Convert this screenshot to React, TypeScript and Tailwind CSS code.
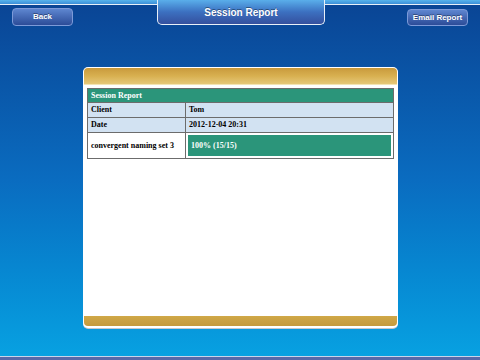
export default function App() {
  return (
    <div className="relative w-[480px] h-[360px] overflow-hidden bg-gradient-to-b from-[#0a4494] via-[#0a6cc0] to-[#08a2e2] font-['Liberation_Sans',sans-serif]">
      {/* top strip */}
      <div className="absolute left-0 top-0 w-[480px] h-[5px] bg-gradient-to-b from-[#58b4ec] to-[#3c8ed8] border-b border-[#e8f0f8]" />
      {/* title tab */}
      <div className="absolute left-[157px] top-0 w-[168px] h-[25px] rounded-b-[5px] border-x border-b border-[#e8f0f8] bg-gradient-to-b from-[#5aaeea] via-[#3c70c0] to-[#34509e] flex items-center justify-center">
        <span className="text-white font-bold text-[10px] [text-shadow:0_-1px_0_rgba(0,0,0,0.4)]">Session Report</span>
      </div>

      {/* header buttons */}
      <div className="flex justify-between px-[12px] pt-[8px]">
        <button className="w-[61px] h-[18px] rounded-[4px] border border-[#7c9ad8] bg-gradient-to-b from-[#5e86d0] to-[#2c4c98] text-white text-[8px] font-bold [text-shadow:0_-1px_0_rgba(0,0,0,0.4)]">
          Back
        </button>
        <button className="w-[61px] h-[17px] mt-[1px] rounded-[4px] border border-[#7c9ad8] bg-gradient-to-b from-[#5e86d0] to-[#2c4c98] text-white text-[8px] font-bold [text-shadow:0_-1px_0_rgba(0,0,0,0.4)]">
          Email Report
        </button>
      </div>

      {/* report panel */}
      <div className="absolute left-[83px] top-[67px] w-[315px] h-[261px] rounded-[5px] bg-white shadow-[0_1px_0_#c8c8c8] flex flex-col overflow-hidden">
        <div className="h-[17px] mx-[1px] mt-[1px] rounded-t-[4px] bg-gradient-to-b from-[#c99a3c] via-[#d8b050] to-[#e6c878] border-b border-[#f4e4b4]" />
        <div className="flex-1 px-[4px] pt-[3px] font-['Liberation_Serif',serif] text-[8px] font-bold text-black">
          <div className="border border-[#6c6c6c]">
            <div className="h-[14px] bg-[#2b957a] text-white flex items-center px-[3px] border-b border-[#6c6c6c]">
              Session Report
            </div>
            <div className="grid grid-cols-[98px_1fr] h-[15px] bg-[#d2e2f2] border-b border-[#6c6c6c]">
              <div className="flex items-center px-[3px] border-r border-[#6c6c6c]">Client</div>
              <div className="flex items-center px-[3px]">Tom</div>
            </div>
            <div className="grid grid-cols-[98px_1fr] h-[15px] bg-[#d2e2f2] border-b border-[#6c6c6c]">
              <div className="flex items-center px-[3px] border-r border-[#6c6c6c]">Date</div>
              <div className="flex items-center px-[3px]">2012-12-04 20:31</div>
            </div>
            <div className="grid grid-cols-[98px_1fr] h-[25px] bg-white">
              <div className="flex items-center px-[3px] border-r border-[#6c6c6c]">convergent naming set 3</div>
              <div className="p-[2px]">
                <div className="h-full bg-[#2b957a] text-white flex items-center px-[3px]">100% (15/15)</div>
              </div>
            </div>
          </div>
        </div>
        <div className="h-[10px] mx-[1px] mb-[2px] rounded-b-[4px] bg-gradient-to-b from-[#d0a848] to-[#c49a3c]" />
      </div>

      {/* bottom edge */}
      <div className="absolute left-0 bottom-0 w-[480px] h-[4px] bg-[#5868a8] border-t border-[#c8d4ec]" />
    </div>
  );
}
